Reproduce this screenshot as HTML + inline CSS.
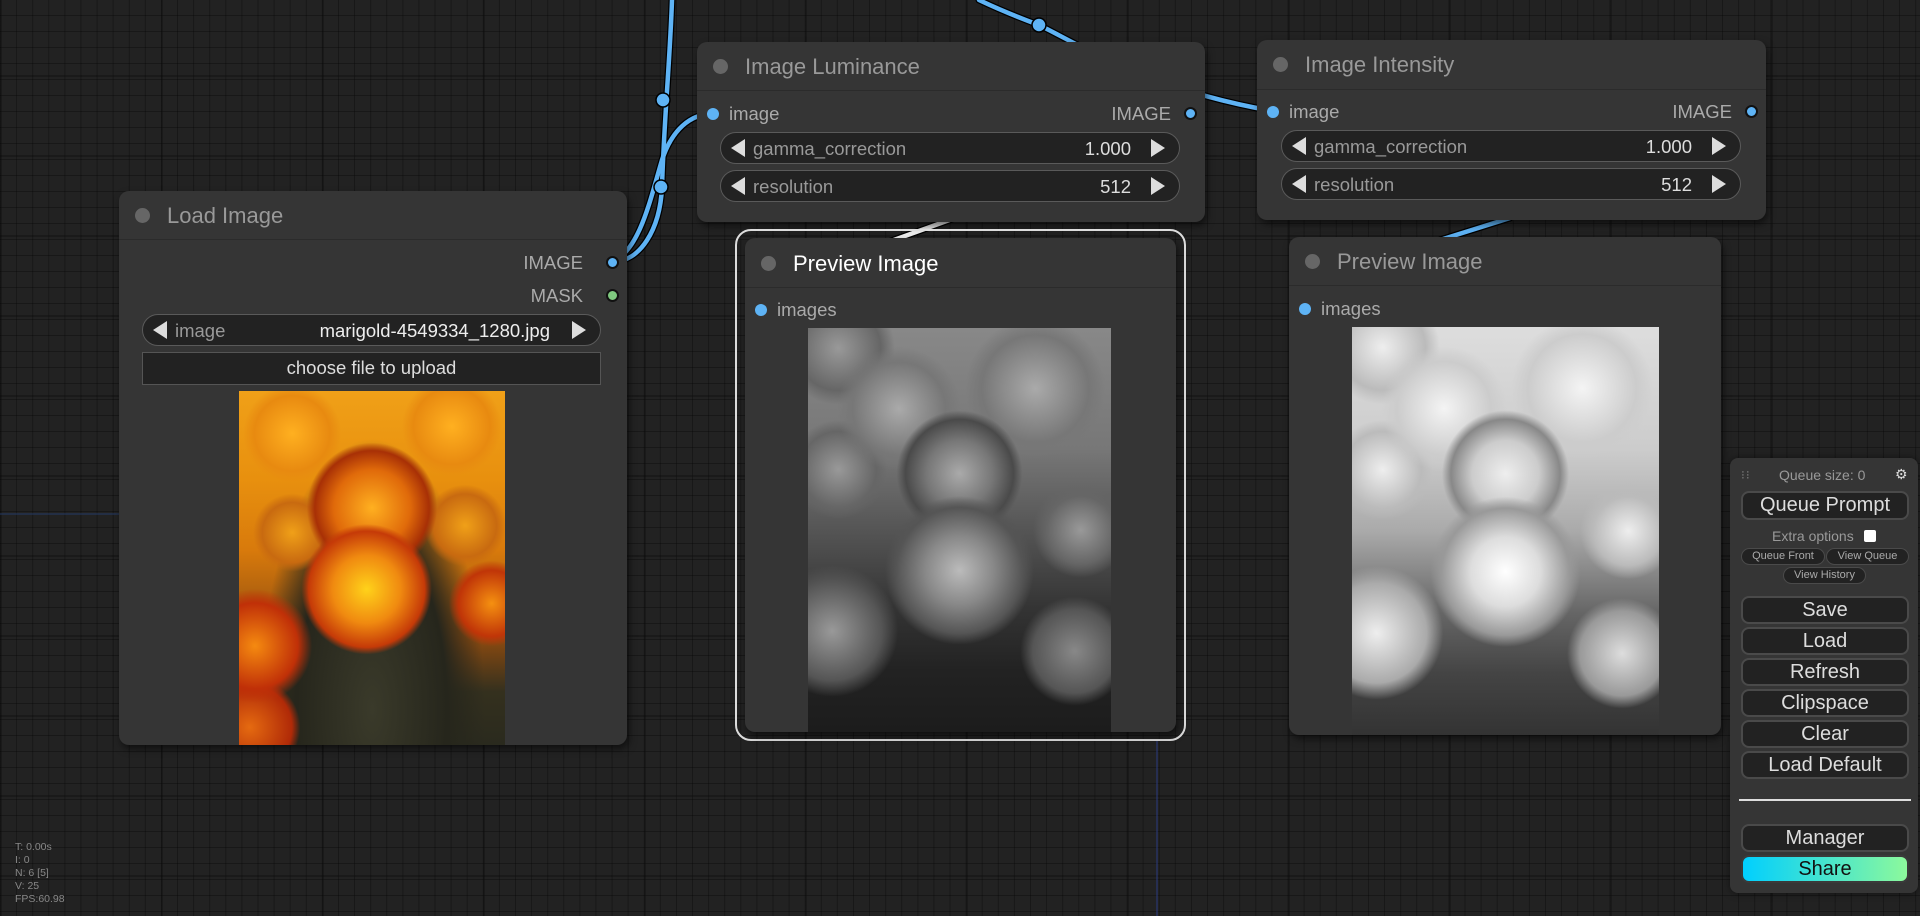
<!DOCTYPE html>
<html><head><meta charset="utf-8">
<style>
*{box-sizing:border-box;margin:0;padding:0}
html,body{width:1920px;height:916px;overflow:hidden}
body{position:relative;font-family:"Liberation Sans",Arial,sans-serif;
background-color:#222;
background-image:
linear-gradient(90deg,rgba(10,10,10,.35) 2px,transparent 2px),
linear-gradient(0deg,rgba(10,10,10,.35) 2px,transparent 2px),
linear-gradient(90deg,rgba(0,0,0,.3) 1px,transparent 1px),
linear-gradient(0deg,rgba(0,0,0,.3) 1px,transparent 1px);
background-size:161px 80px,161px 80px,16.1px 16px,16.1px 16px;
background-position:0 -3px,0 -3px,0 0,0 0;}
.abs{position:absolute}
.node{position:absolute;background:#353535;border-radius:10px;box-shadow:2px 4px 8px rgba(0,0,0,.55)}
.title{position:absolute;left:0;right:0;top:0;border-bottom:1px solid #2b2b2b;color:#999;font-size:22px}
.title .dot{position:absolute;left:16px;width:15px;height:15px;border-radius:50%;background:#666}
.title span{position:absolute}
.lbl{position:absolute;color:#aaa;font-size:18.5px;white-space:nowrap}
.sock{position:absolute;width:12px;height:12px;border-radius:50%;background:#5eb3f5}
.sock.o{border:2px solid #111;width:13px;height:13px}
.w{position:absolute;height:32px;border:1.5px solid #5a5a5a;border-radius:16px;background:#222;color:#999;font-size:18.5px}
.w .l,.w .r{position:absolute;top:6px;width:0;height:0;border-top:9px solid transparent;border-bottom:9px solid transparent}
.w .l{left:10px;border-right:14px solid #ddd}
.w .r{right:14px;border-left:14px solid #ddd}
.w .n{position:absolute;left:32px;top:5px}
.w .v{position:absolute;right:48px;top:5px;color:#ddd}
.mb{position:absolute;left:1741px;width:168px;height:28px;background:#222;border:2px solid #4a4a4a;border-radius:8px;color:#ddd;font-size:20px;text-align:center;line-height:24px}
.sb{position:absolute;height:17px;background:#222;border:1.5px solid #4a4a4a;border-radius:9px;color:#aaa;font-size:11px;text-align:center;line-height:14px}
.img{position:absolute;overflow:hidden}
.stats{position:absolute;left:15px;color:#888;font-size:10.5px;line-height:13px}
</style></head><body>

<svg class="abs" style="left:0;top:0" width="1920" height="916">
<g fill="none" stroke-linecap="round">
<path d="M672 0 C670 60,664 120,662 187 C660 230,640 262,612 262" stroke="#000" stroke-width="7"/>
<path d="M612 262 C640 250,650 200,662 160 C672 130,690 114,712 114" stroke="#000" stroke-width="7"/>
<path d="M979 0 C1000 10,1020 18,1039 25 C1080 45,1150 90,1273 111" stroke="#000" stroke-width="7"/>
<path d="M672 0 C670 60,664 120,662 187 C660 230,640 262,612 262" stroke="#5eb3f5" stroke-width="4.5"/>
<path d="M612 262 C640 250,650 200,662 160 C672 130,690 114,712 114" stroke="#5eb3f5" stroke-width="4.5"/>
<path d="M979 0 C1000 10,1020 18,1039 25 C1080 45,1150 90,1273 111" stroke="#5eb3f5" stroke-width="4.5"/>
<path d="M955 218 L880 245" stroke="#000" stroke-width="7"/>
<path d="M955 218 L880 245" stroke="#eee" stroke-width="4.5"/>
<path d="M1510 218 L1440 240" stroke="#000" stroke-width="7"/>
<path d="M1510 218 L1440 240" stroke="#5eb3f5" stroke-width="4.5"/>
</g>
<circle cx="663" cy="100" r="7" fill="#5eb3f5" stroke="#000" stroke-width="1.5"/>
<circle cx="661" cy="187" r="7" fill="#5eb3f5" stroke="#000" stroke-width="1.5"/>
<circle cx="1039" cy="25" r="7" fill="#5eb3f5" stroke="#000" stroke-width="1.5"/>
<line x1="0" y1="514" x2="119" y2="514" stroke="#243a66" stroke-width="1"/>
<line x1="1157" y1="741" x2="1157" y2="916" stroke="#2a3a80" stroke-width="1"/>
</svg>

<div class="node" style="left:119px;top:191px;width:508px;height:554px">
 <div class="title" style="height:49px"><div class="dot" style="top:17px"></div><span style="left:48px;top:12px">Load Image</span></div>
 <div class="lbl" style="right:44px;top:61px">IMAGE</div><div class="sock o" style="right:8px;top:65px"></div>
 <div class="lbl" style="right:44px;top:94px">MASK</div><div class="sock o" style="right:8px;top:98px;background:#7fc97f"></div>
 <div class="w" style="left:23px;top:123px;width:459px"><div class="l"></div><div class="n">image</div><div class="v" style="right:50px;color:#eee">marigold-4549334_1280.jpg</div><div class="r"></div></div>
 <div class="abs" style="left:23px;top:161px;width:459px;height:33px;background:#222;border:1.5px solid #555;color:#ddd;font-size:18.5px;text-align:center;line-height:30px">choose file to upload</div>
 <div class="img" style="left:120px;top:200px;width:266px;height:354px;background:
 radial-gradient(circle at 48% 56%,#ffd21a 0,#f08a10 14%,#c53a08 24%,transparent 27%),
 radial-gradient(circle at 50% 33%,#ffb020 0,#e06a0a 14%,#a83006 21%,transparent 24%),
 radial-gradient(circle at 6% 72%,#f58a10 0,#c03008 12%,transparent 16%),
 radial-gradient(circle at 95% 60%,#f59010 0,#c03508 10%,transparent 13%),
 radial-gradient(circle at 4% 95%,#e56a10 0,#b02a08 10%,transparent 12%),
 radial-gradient(circle at 20% 12%,#ffb020 0,#e88a10 10%,transparent 13%),
 radial-gradient(circle at 80% 10%,#ffb020 0,#e88a10 10%,transparent 13%),
 radial-gradient(circle at 20% 40%,#f0a018 0,#c86a10 10%,transparent 13%),
 radial-gradient(circle at 85% 38%,#f0a018 0,#c86a10 10%,transparent 13%),
 radial-gradient(ellipse at 50% 90%,#3a3a2a 0,#26261c 40%,transparent 60%),
 linear-gradient(180deg,#f0a018 0%,#e8900e 25%,#d87a0c 45%,#8a4a10 70%,#34301e 85%,#2a2a1e 100%)"></div>
</div>

<div class="node" style="left:697px;top:42px;width:508px;height:180px">
 <div class="title" style="height:49px"><div class="dot" style="top:17px"></div><span style="left:48px;top:12px">Image Luminance</span></div>
 <div class="sock" style="left:10px;top:66px"></div><div class="lbl" style="left:32px;top:61px">image</div>
 <div class="lbl" style="right:34px;top:61px">IMAGE</div><div class="sock o" style="right:8px;top:65px"></div>
 <div class="w" style="left:23px;top:90px;width:460px"><div class="l"></div><div class="n">gamma_correction</div><div class="v">1.000</div><div class="r"></div></div>
 <div class="w" style="left:23px;top:128px;width:460px"><div class="l"></div><div class="n">resolution</div><div class="v">512</div><div class="r"></div></div>
</div>

<div class="node" style="left:1257px;top:40px;width:509px;height:180px">
 <div class="title" style="height:50px"><div class="dot" style="top:17px"></div><span style="left:48px;top:12px">Image Intensity</span></div>
 <div class="sock" style="left:10px;top:66px"></div><div class="lbl" style="left:32px;top:61px">image</div>
 <div class="lbl" style="right:34px;top:61px">IMAGE</div><div class="sock o" style="right:8px;top:65px"></div>
 <div class="w" style="left:24px;top:90px;width:460px"><div class="l"></div><div class="n">gamma_correction</div><div class="v">1.000</div><div class="r"></div></div>
 <div class="w" style="left:24px;top:128px;width:460px"><div class="l"></div><div class="n">resolution</div><div class="v">512</div><div class="r"></div></div>
</div>

<div class="abs" style="left:735px;top:229px;width:451px;height:512px;border:2px solid #ddd;border-radius:16px"></div>
<div class="node" style="left:745px;top:238px;width:431px;height:494px">
 <div class="title" style="height:50px;color:#fff"><div class="dot" style="top:18px"></div><span style="left:48px;top:13px">Preview Image</span></div>
 <div class="sock" style="left:10px;top:66px"></div><div class="lbl" style="left:32px;top:61px">images</div>
 <div class="img" style="left:63px;top:90px;width:303px;height:404px;background:
 radial-gradient(circle at 50% 60%,#bbb 0,#888 12%,#555 22%,transparent 26%),
 radial-gradient(circle at 50% 36%,#aaa 0,#777 11%,#4a4a4a 18%,transparent 21%),
 radial-gradient(circle at 90% 50%,#999 0,#666 10%,transparent 14%),
 radial-gradient(circle at 8% 75%,#999 0,#555 12%,transparent 16%),
 radial-gradient(circle at 30% 20%,#aaa 0,#777 12%,transparent 16%),
 radial-gradient(circle at 75% 15%,#aaa 0,#777 13%,transparent 17%),
 radial-gradient(circle at 10% 35%,#999 0,#666 10%,transparent 13%),
 radial-gradient(circle at 88% 80%,#888 0,#555 10%,transparent 13%),
 radial-gradient(circle at 10% 5%,#999 0,#666 9%,transparent 12%),
 linear-gradient(180deg,#888 0%,#777 30%,#555 50%,#333 70%,#222 85%,#1c1c1c 100%)"></div>
</div>

<div class="node" style="left:1289px;top:237px;width:432px;height:498px">
 <div class="title" style="height:49px"><div class="dot" style="top:17px"></div><span style="left:48px;top:12px">Preview Image</span></div>
 <div class="sock" style="left:10px;top:66px"></div><div class="lbl" style="left:32px;top:61px">images</div>
 <div class="img" style="left:63px;top:90px;width:307px;height:408px;background:
 radial-gradient(circle at 50% 60%,#fff 0,#ddd 12%,#999 22%,transparent 26%),
 radial-gradient(circle at 50% 36%,#eee 0,#ccc 11%,#888 18%,transparent 21%),
 radial-gradient(circle at 90% 50%,#eee 0,#bbb 10%,transparent 14%),
 radial-gradient(circle at 8% 75%,#eee 0,#aaa 12%,transparent 16%),
 radial-gradient(circle at 30% 20%,#f4f4f4 0,#ccc 12%,transparent 16%),
 radial-gradient(circle at 75% 15%,#f4f4f4 0,#ccc 13%,transparent 17%),
 radial-gradient(circle at 10% 35%,#eee 0,#bbb 10%,transparent 13%),
 radial-gradient(circle at 88% 80%,#ddd 0,#999 10%,transparent 13%),
 radial-gradient(circle at 10% 5%,#eee 0,#bbb 9%,transparent 12%),
 linear-gradient(180deg,#ddd 0%,#ccc 30%,#aaa 50%,#666 70%,#444 85%,#333 100%)"></div>
</div>

<div class="abs" style="left:1730px;top:458px;width:188px;height:435px;background:#353535;border-radius:8px;box-shadow:0 0 8px rgba(0,0,0,.5)"></div>
<div class="abs" style="left:1741px;top:468px;color:#777;font-size:12px;letter-spacing:1px">⁝⁝</div>
<div class="abs" style="left:1779px;top:467px;color:#999;font-size:14px">Queue size: 0</div>
<div class="abs" style="left:1895px;top:466px;color:#ddd;font-size:14px">⚙</div>
<div class="mb" style="top:491px;height:29px;font-size:20px">Queue Prompt</div>
<div class="abs" style="left:1772px;top:528px;color:#999;font-size:14px">Extra options</div>
<div class="abs" style="left:1864px;top:530px;width:12px;height:12px;background:#fff;border-radius:2px"></div>
<div class="sb" style="left:1741px;top:548px;width:84px">Queue Front</div>
<div class="sb" style="left:1826px;top:548px;width:83px">View Queue</div>
<div class="sb" style="left:1783px;top:567px;width:83px">View History</div>
<div class="mb" style="top:596px">Save</div>
<div class="mb" style="top:627px">Load</div>
<div class="mb" style="top:658px">Refresh</div>
<div class="mb" style="top:689px">Clipspace</div>
<div class="mb" style="top:720px">Clear</div>
<div class="mb" style="top:751px">Load Default</div>
<div class="abs" style="left:1739px;top:799px;width:172px;height:2px;background:#ddd"></div>
<div class="mb" style="top:824px">Manager</div>
<div class="mb" style="top:855px;background:linear-gradient(90deg,#00cfff,#8cf99c);color:#111;border-color:#3a3a3a">Share</div>

<div class="stats" style="top:841px">T: 0.00s<br>I: 0<br>N: 6 [5]<br>V: 25<br>FPS:60.98</div>
</body></html>
